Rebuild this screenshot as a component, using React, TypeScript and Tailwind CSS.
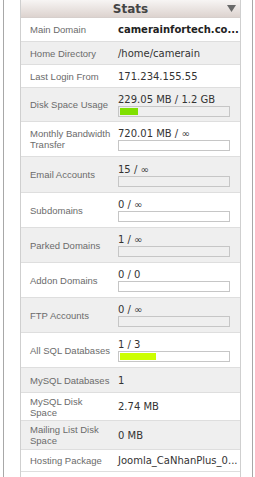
type Row = {
  label: string[]
  value: string
  bold?: boolean
  bar?: boolean
  fill?: number
  color?: string
  h: string
}

const rows: Row[] = [
  { label: ['Main Domain'], value: 'camerainfortech.co...', bold: true, h: 'h-[24px]' },
  { label: ['Home Directory'], value: '/home/camerain', h: 'h-[23px]' },
  { label: ['Last Login From'], value: '171.234.155.55', h: 'h-[23px]' },
  { label: ['Disk Space Usage'], value: '229.05 MB / 1.2 GB', bar: true, fill: 17, color: 'bg-[#80e000]', h: 'h-[34px]' },
  { label: ['Monthly Bandwidth', 'Transfer'], value: '720.01 MB / ∞', bar: true, h: 'h-[35px]' },
  { label: ['Email Accounts'], value: '15 / ∞', bar: true, h: 'h-[36px]' },
  { label: ['Subdomains'], value: '0 / ∞', bar: true, h: 'h-[35px]' },
  { label: ['Parked Domains'], value: '1 / ∞', bar: true, h: 'h-[35px]' },
  { label: ['Addon Domains'], value: '0 / 0', bar: true, h: 'h-[35px]' },
  { label: ['FTP Accounts'], value: '0 / ∞', bar: true, h: 'h-[35px]' },
  { label: ['All SQL Databases'], value: '1 / 3', bar: true, fill: 33, color: 'bg-[#ccff00]', h: 'h-[35px]' },
  { label: ['MySQL Databases'], value: '1', h: 'h-[25px]' },
  { label: ['MySQL Disk', 'Space'], value: '2.74 MB', h: 'h-[28px]' },
  { label: ['Mailing List Disk', 'Space'], value: '0 MB', h: 'h-[29px]' },
  { label: ['Hosting Package'], value: 'Joomla_CaNhanPlus_0...', h: 'h-[22px]' },
]

export default function App() {
  return (
    <div className="flex w-[255px] h-[477px] bg-white overflow-hidden">
      <div className="w-[3px]" />
      <div className="w-px bg-[#a8a8a8]" />
      <div className="w-[16px]" />

      {/* Stats panel */}
      <div className="w-[221px] border-x border-[#cfcfcf] flex flex-col">
        <div className="h-[18px] relative flex items-center justify-center border-b border-[#d6cfcc] bg-gradient-to-b from-[#f7f5f4] to-[#ddd3cf]">
          <span className="text-[12px] font-bold text-[#444] leading-none" style={{ fontFamily: '"DejaVu Sans", Verdana, sans-serif' }}>
            Stats
          </span>
          <svg className="absolute right-[4px] top-[5px]" width="9" height="7" viewBox="0 0 9 7">
            <path d="M0 0 H9 L4.5 7 Z" fill="#6a6a6a" />
          </svg>
        </div>

        {rows.map((r, i) => (
          <div
            key={r.label.join(' ')}
            className={`flex shrink-0 border-b border-[#dedede] ${r.h} ${i % 2 === 1 ? 'bg-[#efefef]' : 'bg-white'}`}
          >
            <div
              className="w-[97px] shrink-0 pl-[9px] flex flex-col justify-center text-[9.5px] leading-[11px] text-[#6b6b6b] whitespace-nowrap"
              style={{ fontFamily: '"Liberation Sans", Arial, sans-serif' }}
            >
              {r.label.map((l) => (
                <span key={l}>{l}</span>
              ))}
            </div>
            <div
              className="flex-1 min-w-0 flex flex-col justify-center text-[10px] leading-[13px] text-[#333] whitespace-nowrap"
              style={{ fontFamily: '"DejaVu Sans", Verdana, sans-serif' }}
            >
              <span className={r.bold ? 'font-bold text-[#222]' : ''}>{r.value}</span>
              {r.bar && (
                <div className="w-[112px] h-[11px] border border-[#c6c6c6] p-px">
                  {r.fill ? (
                    <div className={`h-full ${r.color}`} style={{ width: `${r.fill}%` }} />
                  ) : null}
                </div>
              )}
            </div>
          </div>
        ))}
        <div className="flex-1 bg-white" />
      </div>

      <div className="w-[11px]" />
      <div className="w-px bg-[#a8a8a8]" />
      <div className="flex-1" />
    </div>
  )
}
